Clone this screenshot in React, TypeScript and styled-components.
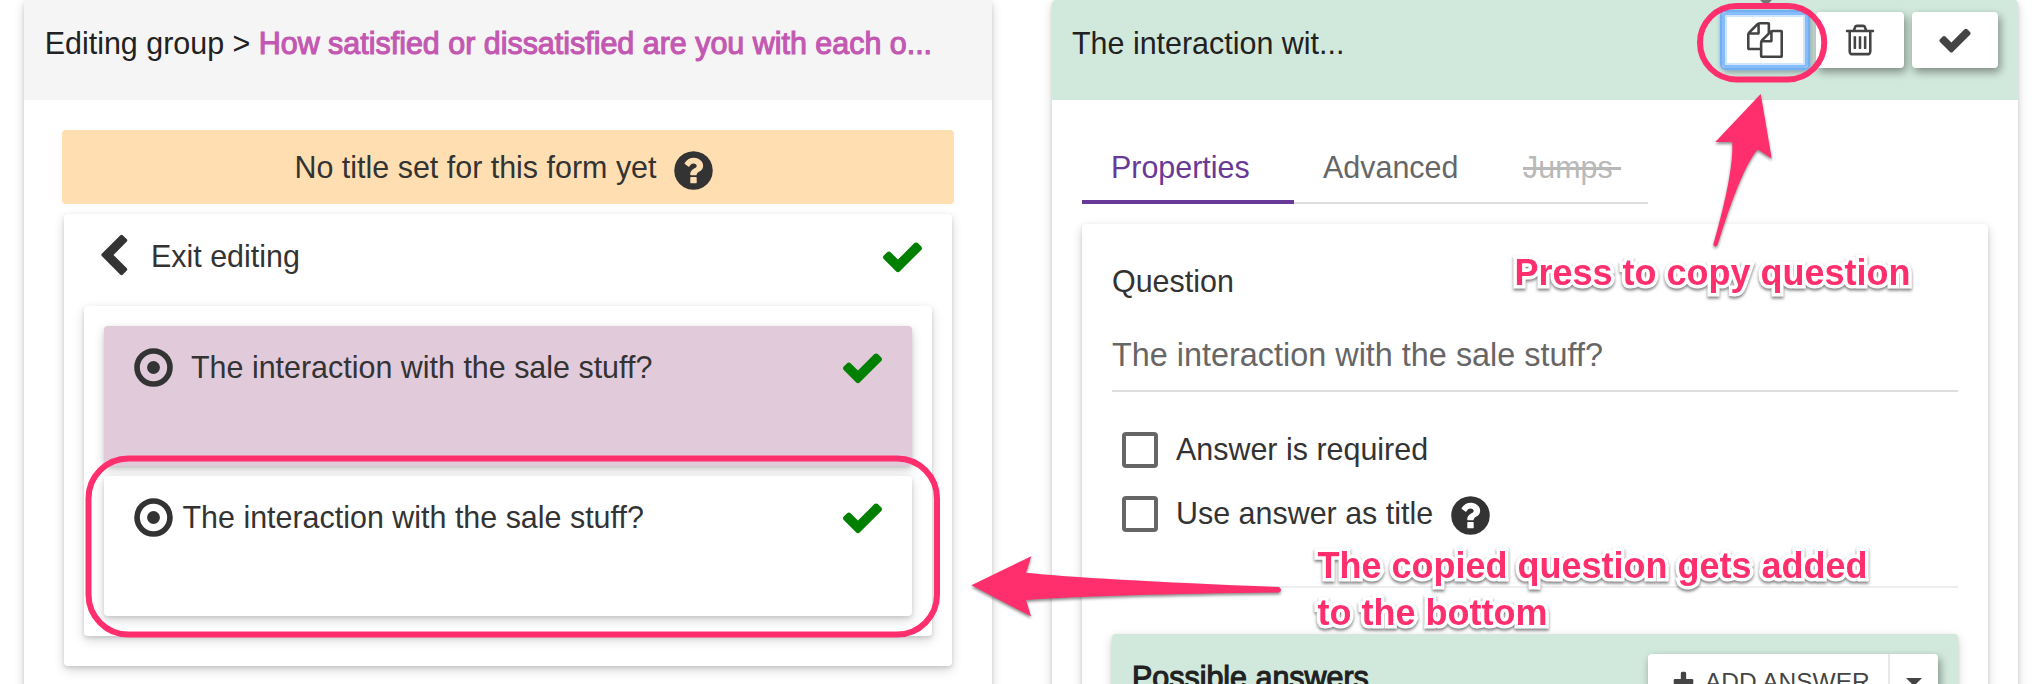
import React from 'react';
import styled, { createGlobalStyle } from 'styled-components';

const Global = createGlobalStyle`
  *, *::before, *::after { box-sizing: border-box; }
  html, body { margin: 0; background: #fff; overflow: hidden; }
  body { font-family: "Liberation Sans", Arial, sans-serif; font-size: 30.45px; line-height: 38px; color: #333; }
`;

const PINK = '#ff2e6c';
const cardShadow = '0 2px 4px rgba(0, 0, 0, 0.12), 0 4px 12px rgba(0, 0, 0, 0.16)';

const Page = styled.div`
  position: relative;
  display: flex;
  width: 2040px;
  height: 684px;
  padding-left: 24px;
  overflow: hidden;
`;

const Panel = styled.section<{ $w: number; $gap?: number }>`
  flex: none;
  width: ${p => p.$w}px;
  height: 760px;
  margin-right: ${p => p.$gap ?? 0}px;
  border-radius: 4px 4px 0 0;
  box-shadow: ${cardShadow};
`;

const PanelHeader = styled.header<{ $bg: string }>`
  display: flex;
  height: 100px;
  padding: 12px 20px 0;
  border-radius: inherit;
  background: ${p => p.$bg};
  color: #212121;
`;

const Title = styled.div<{ $indent?: number }>`
  flex: 1;
  margin-top: 12px;
  padding-left: ${p => p.$indent ?? 0}px;
  white-space: pre;
`;

const GroupName = styled.span`
  color: #c358b2;
  -webkit-text-stroke: 1.1px #c358b2;
`;

const LeftBody = styled.div`
  padding: 30px 38px;
`;

const Banner = styled.div`
  display: flex;
  align-items: center;
  justify-content: center;
  gap: 15px;
  height: 74px;
  padding-right: 5px;
  border-radius: 4px;
  background: #ffdfb2;
  svg { margin-top: 6px; }
`;

const GroupCard = styled.div`
  height: 452px;
  margin: 10px 2px 0;
  padding: 0 20px;
  border-radius: 4px;
  background: #fff;
  box-shadow: ${cardShadow};
`;

const ExitRow = styled.div`
  display: flex;
  align-items: center;
  height: 92px;
  padding: 0 7px 6px;
  svg { margin-bottom: 2px; }
`;

const ExitLabel = styled.span`
  flex: 1;
  padding: 0 0 2px 15px;
`;

const ItemList = styled.div`
  display: flex;
  flex-direction: column;
  gap: 10px;
  height: 330px;
  padding: 20px;
  border-radius: 4px;
  background: #fff;
  box-shadow: ${cardShadow};
`;

const Item = styled.div<{ $selected?: boolean }>`
  display: flex;
  align-items: flex-start;
  height: 140px;
  padding: 19px 27px;
  border-radius: 4px;
  background: ${p => (p.$selected ? '#e1cada' : '#fff')};
  box-shadow: ${cardShadow};
`;

const ItemLabel = styled.span<{ $pad: number }>`
  flex: 1;
  margin-top: 3px;
  padding-left: ${p => p.$pad}px;
`;

const Button = styled.button<{ $w: number; $focus?: boolean }>`
  display: flex;
  align-items: center;
  justify-content: center;
  width: ${p => p.$w}px;
  height: 56px;
  margin-left: 8px;
  padding: 0;
  border: 0;
  border-radius: 4px;
  background: #fff;
  color: #444;
  box-shadow: ${p => (p.$focus
    ? 'inset 0 0 0 3px #86bcf9, inset 0 0 0 5px #cfe4fd, 0 0 0 2px #72aff0, 0 0 4px 2px #8fb9d8, 2px 4px 6px rgba(0,0,0,.35)'
    : '2px 4px 8px rgba(0, 0, 0, 0.4)')};
`;

const RightBody = styled.div`
  padding: 30px;
`;

const Tabs = styled.nav`
  display: flex;
  height: 74px;
`;

const Tab = styled.div<{ $w: number; $state: 'active' | 'idle' | 'off' }>`
  width: ${p => p.$w}px;
  padding: 18px 0 0 29px;
  white-space: pre;
  color: ${p => ({ active: '#693997', idle: '#666', off: '#b9b9b9' })[p.$state]};
  text-decoration: ${p => (p.$state === 'off' ? 'line-through' : 'none')};
  box-shadow: ${p => (p.$state === 'active' ? 'inset 0 -4px #693997' : 'inset 0 -2px #ddd')};
`;

const QuestionCard = styled.div`
  height: 520px;
  margin-top: 20px;
  padding: 38px 30px 0;
  border-radius: 4px;
  background: #fff;
  box-shadow: ${cardShadow};
`;

const FieldLabel = styled.div`
  height: 40px;
`;

const FieldValue = styled.div`
  height: 90px;
  padding-top: 34px;
  border-bottom: 2px solid #ddd;
  font-size: 32.4px;
  color: #666;
`;

const Options = styled.div`
  display: flex;
  flex-direction: column;
  gap: 24px;
  height: 194px;
  padding: 38px 10px 0;
`;

const Option = styled.label`
  display: flex;
  align-items: center;
  height: 40px;
  padding-bottom: 2px;
  svg { margin: 5px 0 0 15px; }
`;

const Checkbox = styled.span`
  width: 36px;
  height: 36px;
  margin: 2px 18px 0 0;
  border: 4px solid #666;
  border-radius: 4px;
`;

const Answers = styled.div`
  display: flex;
  justify-content: space-between;
  height: 120px;
  margin-top: 46px;
  padding: 20px 20px 0;
  border-radius: 4px;
  background: #d1e8dc;
  box-shadow: ${cardShadow};
`;

const Rule = styled.div`
  height: 2px;
  background: #eee;
`;

const AnswersTitle = styled.div`
  margin-top: 4px;
  color: #212121;
  -webkit-text-stroke: 1.1px #212121;
`;

const SplitButton = styled.div`
  display: flex;
  width: 290px;
  height: 56px;
  border-radius: 4px;
  background: #fff;
  color: #444;
  font-size: 24.5px;
  box-shadow: 2px 4px 8px rgba(0, 0, 0, 0.4);
`;

const SplitMain = styled.div`
  display: flex;
  align-items: center;
  gap: 9px;
  width: 242px;
  padding-left: 23px;
  border-right: 2px solid #e8e8e8;
  white-space: nowrap;
`;

const SplitCaret = styled.div`
  display: flex;
  align-items: center;
  justify-content: center;
  flex: 1;
`;

const Overlay = styled.svg`
  position: absolute;
  left: 0;
  top: 0;
`;

const Arrows = styled.g`
  fill: ${PINK};
  filter: drop-shadow(0 2px 1.5px rgba(0, 0, 0, 0.45));
`;

const Callout = styled.div<{ $x: number; $y: number }>`
  position: absolute;
  left: ${p => p.$x}px;
  top: ${p => p.$y}px;
  color: ${PINK};
  font-size: 36px;
  font-weight: 700;
  line-height: 47px;
  white-space: pre;
  -webkit-text-stroke: 7px #fff;
  paint-order: stroke fill;
  filter: drop-shadow(0 2px 1.5px rgba(0, 0, 0, 0.5));
`;

const PATHS = {
  check: 'M1671 566q0 40-28 68l-724 724-136 136q-28 28-68 28t-68-28l-136-136-362-362q-28-28-28-68t28-68l136-136q28-28 68-28t68 28l294 295 656-657q28-28 68-28t68 28l136 136q28 28 28 68z',
  back: 'M1427 301l-531 531 531 531q19 19 19 45t-19 45l-166 166q-19 19-45 19t-45-19l-742-742q-19-19-19-45t19-45l742-742q19-19 45-19t45 19l166 166q19 19 19 45t-19 45z',
  help: 'M1024 1376v-192q0-14-9-23t-23-9h-192q-14 0-23 9t-9 23v192q0 14 9 23t23 9h192q14 0 23-9t9-23zm256-672q0-88-55.5-163t-138.5-116-170-41q-243 0-371 213-15 24 8 42l132 100q7 6 19 6 16 0 25-12 53-68 86-92 34-24 86-24 48 0 85.5 26t37.5 59q0 38-20 61t-68 45q-63 28-115.5 86.5t-52.5 125.5v36q0 14 9 23t23 9h192q14 0 23-9t9-23q0-19 21.5-49.5t54.5-49.5q32-18 49-28.5t46-35 44.5-48 28-60.5 12.5-81zm384 192q0 209-103 385.5t-279.5 279.5-385.5 103-385.5-103-279.5-279.5-103-385.5 103-385.5 279.5-279.5 385.5-103 385.5 103 279.5 279.5 103 385.5z',
  trash: 'M704 736v576q0 14-9 23t-23 9h-64q-14 0-23-9t-9-23v-576q0-14 9-23t23-9h64q14 0 23 9t9 23zm256 0v576q0 14-9 23t-23 9h-64q-14 0-23-9t-9-23v-576q0-14 9-23t23-9h64q14 0 23 9t9 23zm256 0v576q0 14-9 23t-23 9h-64q-14 0-23-9t-9-23v-576q0-14 9-23t23-9h64q14 0 23 9t9 23zm128 724v-948h-896v948q0 22 7 40.5t14.5 27 10.5 8.5h832q3 0 10.5-8.5t14.5-27 7-40.5zm-672-1076h448l-48-117q-7-9-17-11h-317q-10 2-17 11zm928 32v64q0 14-9 23t-23 9h-96v948q0 83-47 143.5t-113 60.5h-832q-66 0-113-58.5t-47-141.5v-952h-96q-14 0-23-9t-9-23v-64q0-14 9-23t23-9h309l70-167q15-37 54-63t79-26h320q40 0 79 26t54 63l70 167h309q14 0 23 9t9 23z',
  copy: 'M1696 384q40 0 68 28t28 68v1216q0 40-28 68t-68 28h-960q-40 0-68-28t-28-68v-288h-544q-40 0-68-28t-28-68v-672q0-40 20-88t48-76l408-408q28-28 76-48t88-20h416q40 0 68 28t28 68v328q68-40 128-40h416zm-544 213l-299 299h299v-299zm-640-384l-299 299h299v-299zm196 647l316-316v-416h-384v416q0 40-28 68t-68 28h-416v640h512v-256q0-40 20-88t48-76zm956 804v-1152h-384v416q0 40-28 68t-68 28h-416v640h896z',
  plus: 'M1600 736v192q0 40-28 68t-68 28h-416v416q0 40-28 68t-68 28h-192q-40 0-68-28t-28-68v-416h-416q-40 0-68-28t-28-68v-192q0-40 28-68t68-28h416v-416q0-40 28-68t68-28h192q40 0 68 28t28 68v416h416q40 0 68 28t28 68z',
};

const IconSvg = styled.svg`
  display: block;
  flex: none;
  overflow: visible;
`;

function Icon({ name, size = 45, color = 'currentColor' }: { name: keyof typeof PATHS; size?: number; color?: string }) {
  return (
    <IconSvg width={size} height={size} viewBox="0 0 1792 1792" fill={color}>
      <path d={PATHS[name]} />
    </IconSvg>
  );
}

function RadioIcon() {
  return (
    <IconSvg width={45} height={45} viewBox="0 0 1792 1792" fill="none">
      <circle cx="896" cy="896" r="656" stroke="#333" strokeWidth="224" />
      <circle cx="896" cy="896" r="256" fill="#333" />
    </IconSvg>
  );
}

const QUESTION = 'The interaction with the sale stuff?';

export default function App() {
  return (
    <Page>
      <Global />
      <Panel $w={968} $gap={60}>
        <PanelHeader $bg="#f5f5f5">
          <Title $indent={0.7}>Editing group &gt; <GroupName>How satisfied or dissatisfied are you with each o...</GroupName></Title>
        </PanelHeader>
        <LeftBody>
          <Banner>
            No title set for this form yet
            <Icon name="help" />
          </Banner>
          <GroupCard>
            <ExitRow>
              <Icon name="back" />
              <ExitLabel>Exit editing</ExitLabel>
              <Icon name="check" color="green" />
            </ExitRow>
            <ItemList>
              <Item $selected>
                <RadioIcon />
                <ItemLabel $pad={15}>{QUESTION}</ItemLabel>
                <Icon name="check" color="green" />
              </Item>
              <Item>
                <RadioIcon />
                <ItemLabel $pad={6.5}>{QUESTION}</ItemLabel>
                <Icon name="check" color="green" />
              </Item>
            </ItemList>
          </GroupCard>
        </LeftBody>
      </Panel>

      <Panel $w={966}>
        <PanelHeader $bg="#d1e8dc">
          <Title>The interaction wit...</Title>
          <Button $w={86} $focus><Icon name="copy" size={36} /></Button>
          <Button $w={88}><Icon name="trash" size={36} /></Button>
          <Button $w={86}><Icon name="check" size={36} /></Button>
        </PanelHeader>
        <RightBody>
          <Tabs>
            <Tab $w={212} $state="active">Properties</Tab>
            <Tab $w={200} $state="idle">Advanced</Tab>
            <Tab $w={154} $state="off">{'Jumps\u00a0'}</Tab>
          </Tabs>
          <QuestionCard>
            <FieldLabel>Question</FieldLabel>
            <FieldValue>{QUESTION}</FieldValue>
            <Options>
              <Option><Checkbox />Answer is required</Option>
              <Option><Checkbox />Use answer as title<Icon name="help" /></Option>
            </Options>
            <Rule />
            <Answers>
              <AnswersTitle>Possible answers</AnswersTitle>
              <SplitButton>
                <SplitMain><Icon name="plus" size={25} />ADD ANSWER</SplitMain>
                <SplitCaret>
                  <svg width="16" height="8" viewBox="0 0 16 8"><path d="M0 0h16l-8 8z" fill="#444" /></svg>
                </SplitCaret>
              </SplitButton>
            </Answers>
          </QuestionCard>
        </RightBody>
      </Panel>

      <Overlay width="2040" height="684" viewBox="0 0 2040 684" fill="none">
        <path d="M1760 0h12q-1 1-3 3-3 2.500-6 0z" fill="#777" />
        <g stroke={PINK} strokeWidth="6">
          <rect x="88.500" y="458.500" width="848.500" height="176" rx="40" />
          <rect x="1700" y="6" width="124.300" height="73.500" rx="36.700" />
        </g>
        <Arrows>
          <path d="M971.400 585.300L1031.300 556.300L1026 572.700Q1090 579.500 1279 587Q1283 590 1279 592.600Q1110 594.500 1026 600L1031 616.300Z" />
          <path d="M1760.700 94L1771.700 158.500L1759 150.300Q1757.500 149.500 1756 151.500Q1740 172 1717.500 245Q1715 248 1713.300 244.500Q1734 172 1732.300 142L1715.300 142Z" />
        </Arrows>
      </Overlay>
      <Callout $x={1514.5} $y={249}>Press to copy question</Callout>
      <Callout $x={1317.5} $y={542}>{'The copied question gets added\nto the bottom'}</Callout>
    </Page>
  );
}
